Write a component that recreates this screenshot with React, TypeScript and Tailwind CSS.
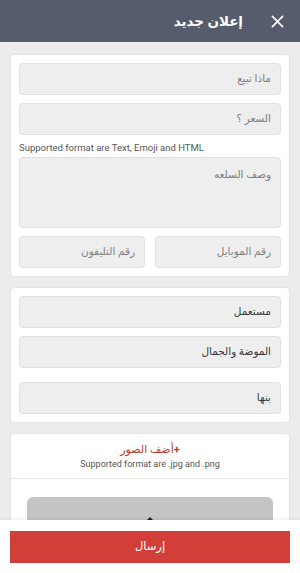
import React from 'react';

const font = { fontFamily: 'Roboto, "DejaVu Sans", sans-serif' };

const Field = ({ text, muted = true, className = '' }: { text: string; muted?: boolean; className?: string }) => (
  <div
    className={`h-[32px] flex items-center px-[9px] rounded-[4px] bg-[#eeeeee] border border-[#e0e0e0] text-[10.5px] ${
      muted ? 'text-[#808080]' : 'text-[#3a3a3a]'
    } ${className}`}
  >
    {text}
  </div>
);

export default function App() {
  return (
    <div className="w-[300px] h-[573px] flex flex-col bg-[#ececec] overflow-hidden" style={font}>
      {/* Header */}
      <div dir="rtl" className="h-[42px] shrink-0 bg-[#565c6c] flex items-center pr-[16px]">
        <svg width="13" height="13" viewBox="0 0 14 14" className="shrink-0">
          <path d="M1.5 1.5 L12.5 12.5 M12.5 1.5 L1.5 12.5" stroke="#ffffff" strokeWidth="1.8" strokeLinecap="round" />
        </svg>
        <span className="mr-[28px] text-white text-[13.5px] font-bold">إعلان جديد</span>
      </div>

      {/* Content */}
      <div className="flex-1 overflow-hidden px-[10px] pt-[12px]">
        {/* Card 1 */}
        <div dir="rtl" className="bg-white rounded-[4px] border border-[#e4e4e4] p-[8px] flex flex-col">
          <Field text="ماذا تبيع" />
          <Field text="السعر ؟" className="mt-[8px]" />
          <div dir="ltr" className="mt-[6px] text-[9.5px] leading-[14px] text-[#555555]">
            Supported format are Text, Emoji and HTML
          </div>
          <div className="mt-[2px] h-[71px] rounded-[4px] bg-[#eeeeee] border border-[#e0e0e0] px-[9px] pt-[9px] text-[10.5px] text-[#808080]">
            وصف السلعه
          </div>
          <div className="mt-[8px] grid grid-cols-2 gap-[10px]">
            <Field text="رقم الموبايل" />
            <Field text="رقم التليفون" />
          </div>
        </div>

        {/* Card 2 */}
        <div dir="rtl" className="mt-[10px] bg-white rounded-[4px] border border-[#e4e4e4] p-[8px] flex flex-col">
          <Field text="مستعمل" muted={false} />
          <Field text="الموضة والجمال" muted={false} className="mt-[8px]" />
          <Field text="بنها" muted={false} className="mt-[14px]" />
        </div>

        {/* Card 3 */}
        <div className="mt-[10px] bg-white rounded-[4px] border border-[#e4e4e4]">
          <div className="flex flex-col items-center pt-[8px] pb-[8px]">
            <span dir="rtl" className="text-[11px] leading-[16px] text-[#c0392b]">
              <span className="font-bold">+</span>أضف الصور
            </span>
            <span className="text-[9px] leading-[12px] text-[#555555]">Supported format are .jpg and .png</span>
          </div>
          <div className="border-t border-[#e6e6e6] px-[16px] pt-[18px]">
            <div className="h-[40px] rounded-t-[6px] bg-[#c4c4c4] flex justify-center pt-[20px]">
              <div className="w-0 h-0 border-l-[5px] border-r-[5px] border-b-[5px] border-l-transparent border-r-transparent border-b-[#222222]" />
            </div>
          </div>
        </div>
      </div>

      {/* Bottom bar */}
      <div className="h-[53px] shrink-0 bg-white px-[10px] pt-[11px] shadow-[0_-1px_3px_rgba(0,0,0,0.08)] relative">
        <button className="w-full h-[32px] bg-[#d13f38] text-white text-[11.5px] flex items-center justify-center">
          إرسال
        </button>
      </div>
    </div>
  );
}
